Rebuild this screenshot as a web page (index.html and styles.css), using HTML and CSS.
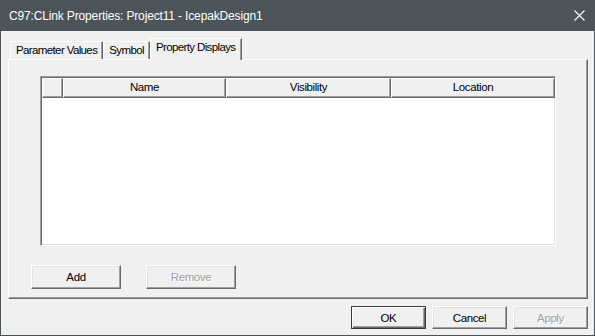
FILE: index.html
```html
<!DOCTYPE html>
<html lang="en">
<head>
  <meta charset="UTF-8" />
  <title>C97:CLink Properties</title>
  <meta name="viewport" content="width=device-width, initial-scale=1.0" />
  <link rel="stylesheet" href="styles.css">
</head>
<body>
  <div class="window">
    <div class="titlebar">
      <span class="title">C97:CLink Properties: Project11 - IcepakDesign1</span>
      <svg class="close" width="11" height="11" viewBox="0 0 11 11">
        <path d="M0.5 0.5 L10.5 10.5 M10.5 0.5 L0.5 10.5" stroke="#ffffff" stroke-width="1.1" fill="none" />
      </svg>
    </div>

    <div class="content">
      <div class="tabs">
        <div class="tab tab-first">Parameter Values</div>
        <div class="tab">Symbol</div>
        <div class="tab active">Property Displays</div>
      </div>

      <div class="panel">
        <div class="listview">
          <div class="header">
            <div class="col col-blank"></div>
            <div class="col col-name">Name</div>
            <div class="col col-vis">Visibility</div>
            <div class="col col-loc">Location</div>
          </div>
        </div>

        <div class="panel-buttons">
          <button class="btn btn-wide">Add</button>
          <button class="btn btn-wide" disabled>Remove</button>
        </div>
      </div>

      <div class="footer">
        <button class="btn default">OK</button>
        <button class="btn">Cancel</button>
        <button class="btn" disabled>Apply</button>
      </div>
    </div>
  </div>
</body>
</html>
```

FILE: styles.css
```css
:root {
  --frame: #4b5459;
  --face: #f0f0f0;
  --light: #e3e3e3;
  --shadow: #a0a0a0;
  --dark: #696969;
  --text: #000000;
}

* {
  box-sizing: border-box;
}

body {
  margin: 0;
  padding: 0;
  background: var(--face);
  font-family: "Liberation Sans", Arial, sans-serif;
  font-size: 11px;
  color: var(--text);
}

.window {
  width: 595px;
  height: 336px;
  border: 1px solid var(--frame);
  border-top: none;
  background: var(--face);
  display: flex;
  flex-direction: column;
}

.titlebar {
  height: 31px;
  margin: 0 -1px;
  background: var(--frame);
  display: flex;
  align-items: center;
  justify-content: space-between;
  padding: 0 10px 0 9px;
}

.title {
  color: #ffffff;
  font-size: 12px;
  letter-spacing: -0.15px;
}

.close {
  display: block;
}

.content {
  flex: 1;
  padding: 7px 6px 0 7px;
  display: flex;
  flex-direction: column;
}

/* tab strip */

.tabs {
  height: 21px;
  display: flex;
  align-items: flex-end;
  padding-left: 2px;
  position: relative;
  z-index: 1;
}

.tab {
  height: 18px;
  padding: 2px 5px 0 5px;
  border-top: 1px solid #ffffff;
  border-left: 1px solid #ffffff;
  border-right: 1px solid var(--dark);
  box-shadow: inset -1px 0 var(--shadow);
  font-size: 11.5px;
  letter-spacing: -0.62px;
  white-space: nowrap;
}

.tab.active {
  height: 22px;
  margin-bottom: -1px;
  padding-top: 2px;
  background: var(--face);
}

/* property page */

.panel {
  height: 240px;
  border: 1px solid;
  border-color: #ffffff var(--dark) var(--dark) #ffffff;
  box-shadow: inset -1px -1px var(--shadow);
  padding: 16px 0 0 31px;
  display: flex;
  flex-direction: column;
}

.listview {
  width: 516px;
  height: 170px;
  background: #ffffff;
  border: 1px solid;
  border-color: var(--shadow) #ffffff #ffffff var(--shadow);
  box-shadow: inset 1px 1px var(--dark), inset -1px -1px var(--light);
  padding: 1px 0 0 1px;
}

.header {
  display: flex;
  height: 20px;
}

.col {
  height: 20px;
  background: var(--face);
  border-top: 1px solid #ffffff;
  border-left: 1px solid #ffffff;
  border-right: 1px solid var(--dark);
  border-bottom: 1px solid var(--dark);
  box-shadow: inset -1px -1px var(--shadow);
  text-align: center;
  line-height: 17px;
  font-size: 11.5px;
  letter-spacing: -0.4px;
}

.col-blank { width: 21px; }
.col-name { width: 163px; }
.col-vis { width: 165px; }
.col-loc { width: 164px; }

.panel-buttons {
  display: flex;
  gap: 25px;
  margin-top: 19px;
  margin-left: -9px;
}

/* push buttons */

.btn {
  width: 75px;
  height: 23px;
  padding: 0;
  font-family: inherit;
  font-size: 11.5px;
  letter-spacing: -0.4px;
  color: var(--text);
  background: var(--face);
  border: 1px solid;
  border-color: #ffffff var(--dark) var(--dark) #ffffff;
  box-shadow: inset -1px -1px var(--shadow), inset 1px 1px var(--light);
  border-radius: 0;
}

.btn-wide {
  width: 90px;
  height: 24px;
}

.btn:disabled {
  color: var(--shadow);
  text-shadow: 1px 1px #ffffff;
}

.btn.default {
  border-color: #3c3c3c;
  box-shadow: inset 1px 1px #ffffff, inset -1px -1px var(--dark), inset -2px -2px var(--shadow);
}

.footer {
  display: flex;
  justify-content: flex-end;
  gap: 6px;
  margin-top: 7px;
}
```
